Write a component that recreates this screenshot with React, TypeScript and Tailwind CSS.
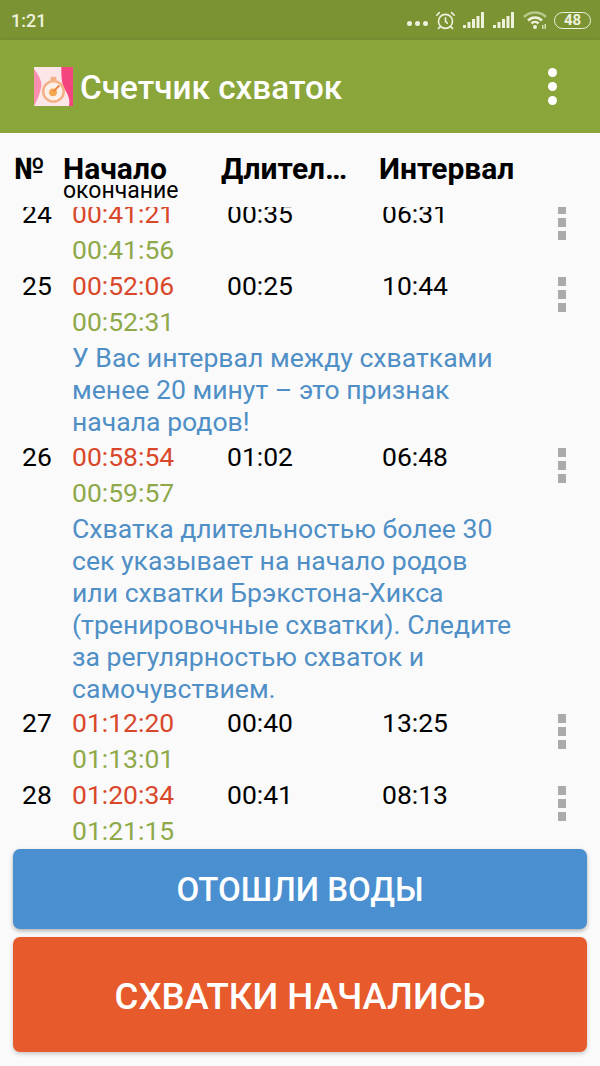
import React from 'react';
import { AlarmClock } from 'lucide-react';

const rows = [
  { n: '24', start: '00:41:21', end: '00:41:56', dur: '00:35', gap: '06:31' },
  {
    n: '25',
    start: '00:52:06',
    end: '00:52:31',
    dur: '00:25',
    gap: '10:44',
    note: ['У Вас интервал между схватками', 'менее 20 минут – это признак', 'начала родов!'],
  },
  {
    n: '26',
    start: '00:58:54',
    end: '00:59:57',
    dur: '01:02',
    gap: '06:48',
    note: [
      'Схватка длительностью более 30',
      'сек указывает на начало родов',
      'или схватки Брэкстона-Хикса',
      '(тренировочные схватки). Следите',
      'за регулярностью схваток и',
      'самочувствием.',
    ],
  },
  { n: '27', start: '01:12:20', end: '01:13:01', dur: '00:40', gap: '13:25' },
  { n: '28', start: '01:20:34', end: '01:21:15', dur: '00:41', gap: '08:13' },
];

function Signal() {
  return (
    <svg width="22" height="16" viewBox="0 0 22 16" fill="#eef2dc">
      <rect x="0" y="13" width="3" height="3" />
      <rect x="4.5" y="10" width="3" height="6" />
      <rect x="9" y="7" width="3" height="9" />
      <rect x="13.5" y="4" width="3" height="12" />
      <rect x="18" y="0" width="3" height="16" />
    </svg>
  );
}

function Wifi() {
  return (
    <svg width="24" height="20" viewBox="0 0 24 20" fill="none">
      <path d="M1 7 C7 1 17 1 23 7" stroke="#b9c98a" strokeWidth="2.5" />
      <path d="M5 10.5 C9 6.5 15 6.5 19 10.5" stroke="#eef2dc" strokeWidth="2.5" />
      <path d="M8.5 13.5 C10.5 11.5 13.5 11.5 15.5 13.5" stroke="#eef2dc" strokeWidth="2.5" />
      <circle cx="12" cy="17" r="2" fill="#eef2dc" />
      <rect x="19" y="15" width="1.5" height="4" fill="#d5deb0" />
      <rect x="21.5" y="14" width="1.5" height="5" fill="#d5deb0" />
    </svg>
  );
}

function AppIcon() {
  return (
    <svg width="39" height="39" viewBox="0 0 40 40">
      <rect width="40" height="40" fill="#fde6e8" />
      <path d="M0 2 C6 10 9 16 7 22 C6 28 3 34 0 40 Z" fill="#fb8fb0" />
      <path d="M28 0 H40 V40 H36 C38 28 30 24 29 16 C28 10 28 5 28 0 Z" fill="#f4457f" />
      <rect x="17" y="10" width="6" height="4" rx="1.5" fill="#f3b084" />
      <circle cx="20" cy="25" r="10.5" fill="#fdf0e8" stroke="#f3b084" strokeWidth="2.5" />
      <circle cx="19.5" cy="26" r="4" fill="#f6a64e" />
      <path d="M20 25 L26 19" stroke="#ee8442" strokeWidth="2" />
    </svg>
  );
}

function RowDots() {
  return (
    <div className="flex flex-col gap-[4px] mt-[9px] ml-[2px]">
      <div className="w-[8px] h-[9px] bg-[#aaaaaa]" />
      <div className="w-[8px] h-[9px] bg-[#aaaaaa]" />
      <div className="w-[8px] h-[9px] bg-[#aaaaaa]" />
    </div>
  );
}

export default function App() {
  return (
    <div className="w-[600px] h-[1066px] flex flex-col bg-[#fafafa] overflow-hidden font-['Roboto',sans-serif]">
      {/* status bar */}
      <div className="h-[40px] shrink-0 bg-[#7c9334] flex items-center justify-between pl-[11px] pr-[9px]">
        <span className="text-[18px] font-medium text-[#eef2dc]">1:21</span>
        <div className="flex items-center">
          <div className="flex gap-[3px] mr-[7px] mt-[6px]">
            <div className="w-[5px] h-[5px] rounded-full bg-[#eef2dc]" />
            <div className="w-[5px] h-[5px] rounded-full bg-[#eef2dc]" />
            <div className="w-[5px] h-[5px] rounded-full bg-[#eef2dc]" />
          </div>
          <AlarmClock size={21} color="#eef2dc" strokeWidth={1.8} className="mr-[7px]" />
          <div className="mr-[8px]"><Signal /></div>
          <div className="mr-[8px]"><Signal /></div>
          <div className="mr-[7px]"><Wifi /></div>
          <div className="w-[37px] h-[17px] rounded-full border border-[#eef2dc] flex items-center justify-center text-[15px] font-bold text-[#eef2dc]">
            48
          </div>
        </div>
      </div>

      {/* app bar */}
      <div className="h-[93px] shrink-0 bg-[#8aa63b] shadow-[0_2px_5px_rgba(0,0,0,0.3)] z-10 flex items-center pl-[34px] pr-[43px]">
        <AppIcon />
        <span className="ml-[7px] pt-[2px] text-[33.3px] font-medium text-white leading-none">Счетчик схваток</span>
        <div className="ml-auto flex flex-col gap-[5px]">
          <div className="w-[9px] h-[9px] rounded-full bg-white" />
          <div className="w-[9px] h-[9px] rounded-full bg-white" />
          <div className="w-[9px] h-[9px] rounded-full bg-white" />
        </div>
      </div>

      {/* table head */}
      <div className="h-[74px] shrink-0 flex pt-[20px] text-black relative z-10 bg-[#fafafa]">
        <div className="w-[63px] pl-[14px] text-[30px] font-bold leading-[32px]">№</div>
        <div className="w-[158px]">
          <div className="text-[30px] font-bold leading-[32px]">Начало</div>
          <div className="text-[23px] leading-[20px] -mt-[4px]">окончание</div>
        </div>
        <div className="w-[158px] text-[30px] font-bold leading-[32px]">Длител…</div>
        <div className="text-[30px] font-bold leading-[32px]">Интервал</div>
      </div>

      {/* list */}
      <div className="flex-1 min-h-0 overflow-hidden">
        <div className="-mt-[11px]">
          {rows.map((r) => (
            <div key={r.n}>
              <div className="flex text-[26.5px] leading-[36px]">
                <div className="w-[72px] pl-[22px] text-black">{r.n}</div>
                <div className="w-[155px]">
                  <div className="text-[#d9472b]">{r.start}</div>
                  <div className="text-[#8fa94a]">{r.end}</div>
                </div>
                <div className="w-[155px] text-black">{r.dur}</div>
                <div className="w-[174px] text-black">{r.gap}</div>
                <RowDots />
              </div>
              {r.note && (
                <div className={`pl-[72px] pt-[2px] text-[26.6px] leading-[32px] text-[#4f8fc6] ${r.n === '25' ? 'pb-[1px]' : ''}`}>
                  {r.note.map((line) => (
                    <div key={line}>{line}</div>
                  ))}
                </div>
              )}
            </div>
          ))}
        </div>
      </div>

      {/* buttons */}
      <div className="shrink-0 px-[13px] pb-[14px] flex flex-col gap-[8px] bg-[#fafafa]">
        <div className="h-[80px] pt-[2px] rounded-[7px] bg-[#4a8fd0] shadow-[0_2px_4px_rgba(0,0,0,0.3)] flex items-center justify-center text-[33px] font-medium text-white">
          ОТОШЛИ ВОДЫ
        </div>
        <div className="h-[115px] pt-[5px] rounded-[7px] bg-[#e65a2c] shadow-[0_2px_4px_rgba(0,0,0,0.2)] flex items-center justify-center text-[36.6px] font-medium text-white">
          СХВАТКИ НАЧАЛИСЬ
        </div>
      </div>
    </div>
  );
}
